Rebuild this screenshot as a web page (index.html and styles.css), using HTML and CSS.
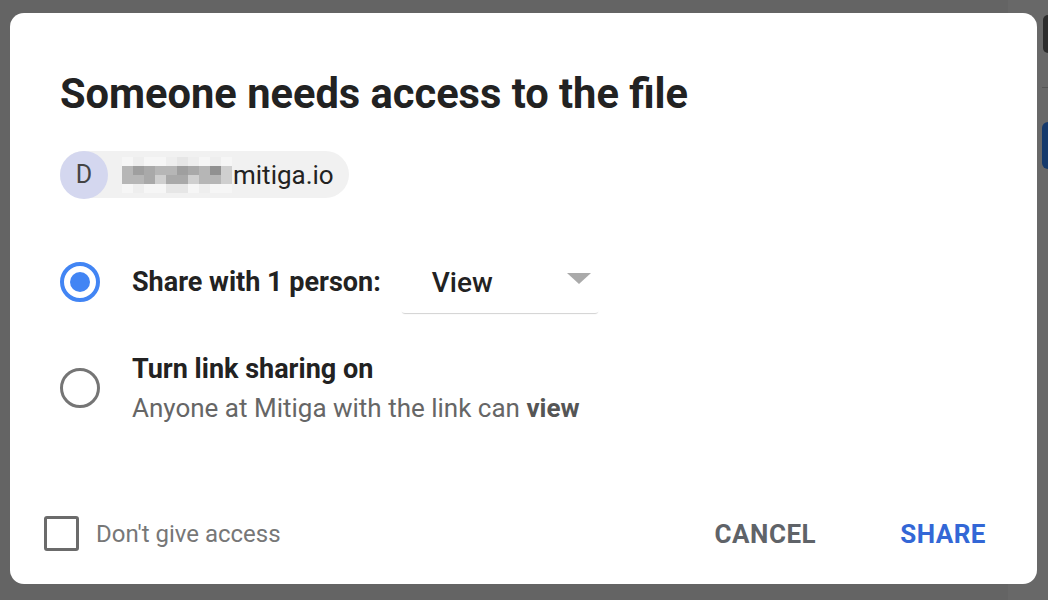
FILE: index.html
```html
<!DOCTYPE html>
<html lang="en">
<head>
    <meta charset="UTF-8">
    <meta name="viewport" content="width=device-width, initial-scale=1.0">
    <title>Share request</title>
    <link rel="stylesheet" href="styles.css">
</head>
<body>
    <!-- page behind the overlay, only the right edge shows -->
    <div class="backdrop">
        <div class="peek-strip"></div>
        <div class="peek-dark"></div>
        <div class="peek-line"></div>
        <div class="peek-blue"></div>
    </div>

    <div class="dialog">
        <h1 class="title">Someone needs access to the file</h1>

        <div class="chip">
            <span class="avatar">D</span>
            <span class="blur">
                <i class="s0"></i><i class="s1"></i><i class="s0"></i><i class="s0"></i><i class="s1"></i><i class="s2"></i><i class="s1"></i><i class="s0"></i><i class="s1"></i><i class="s0"></i>
                <i class="s4"></i><i class="s6"></i><i class="s5"></i><i class="s4"></i><i class="s4"></i><i class="s6"></i><i class="s5"></i><i class="s4"></i><i class="s7"></i><i class="s3"></i>
                <i class="s4"></i><i class="s4"></i><i class="s5"></i><i class="s3"></i><i class="s5"></i><i class="s5"></i><i class="s3"></i><i class="s4"></i><i class="s4"></i><i class="s3"></i>
                <i class="s0"></i><i class="s1"></i><i class="s0"></i><i class="s0"></i><i class="s2"></i><i class="s2"></i><i class="s0"></i><i class="s1"></i><i class="s0"></i><i class="s0"></i>
            </span>
            <span class="email">mitiga.io</span>
        </div>

        <div class="options">
            <div class="option">
                <span class="radio checked"></span>
                <div class="share-row">
                    <span class="option-label">Share with 1 person:</span>
                    <div class="select">
                        <span>View</span>
                        <span class="caret"></span>
                    </div>
                </div>
            </div>

            <div class="option">
                <span class="radio"></span>
                <div class="option-text">
                    <div class="option-label">Turn link sharing on</div>
                    <div class="option-hint">Anyone at Mitiga with the link can <b>view</b></div>
                </div>
            </div>
        </div>

        <div class="footer">
            <label class="deny">
                <span class="checkbox"></span>
                <span>Don't give access</span>
            </label>
            <div class="actions">
                <button class="btn cancel">CANCEL</button>
                <button class="btn share">SHARE</button>
            </div>
        </div>
    </div>
</body>
</html>
```

FILE: styles.css
```css
* {
    margin: 0;
    padding: 0;
    box-sizing: border-box;
}

body {
    font-family: Roboto, "Liberation Sans", Arial, sans-serif;
    background-color: #646464;
    width: 1048px;
    height: 600px;
    overflow: hidden;
    position: relative;
}

/* Page behind the modal */
.backdrop {
    position: absolute;
    inset: 0;
    z-index: 0;
}

.peek-strip {
    position: absolute;
    left: 1008px;
    top: 0;
    width: 40px;
    height: 600px;
    background-color: #686868;
}

.peek-dark {
    position: absolute;
    left: 1043px;
    top: 15px;
    width: 20px;
    height: 38px;
    border-radius: 5px;
    background-color: #2c2c2c;
}

.peek-line {
    position: absolute;
    left: 1042px;
    top: 87px;
    width: 10px;
    height: 1px;
    background-color: #555;
}

.peek-blue {
    position: absolute;
    left: 1042px;
    top: 122px;
    width: 20px;
    height: 47px;
    border-radius: 6px;
    background-color: #163a6c;
}

/* Dialog */
.dialog {
    position: relative;
    z-index: 1;
    width: 1027px;
    height: 571px;
    margin: 13px 0 0 10px;
    background-color: #fff;
    border-radius: 14px;
    display: flex;
    flex-direction: column;
    padding: 57px 51px 0 50px;
}

.title {
    font-size: 41.6px;
    font-weight: 700;
    color: #222;
    line-height: 48px;
}

/* Requester chip */
.chip {
    display: inline-flex;
    align-self: flex-start;
    align-items: center;
    height: 47px;
    margin-top: 33px;
    padding-right: 15px;
    border-radius: 24px;
    background-color: #f1f1f1;
}

.avatar {
    width: 48px;
    height: 48px;
    border-radius: 50%;
    background-color: #d4d7ef;
    color: #444;
    font-size: 25px;
    display: flex;
    align-items: center;
    justify-content: center;
}

.blur {
    display: grid;
    grid-template-columns: repeat(10, 11px);
    grid-auto-rows: 9px;
    margin-left: 14px;
}

.blur i { display: block; }
.blur .s0 { background-color: #f6f6f6; }
.blur .s1 { background-color: #eeeeee; }
.blur .s2 { background-color: #e6e6e6; }
.blur .s3 { background-color: #cfcfcf; }
.blur .s4 { background-color: #b6b6b6; }
.blur .s5 { background-color: #a9a9a9; }
.blur .s6 { background-color: #9f9f9f; }
.blur .s7 { background-color: #919191; }

.email {
    font-size: 26px;
    color: #222;
    margin-left: 1px;
}

/* Radio options */
.options {
    margin-top: 53px;
    display: flex;
    flex-direction: column;
    gap: 40px;
}

.option {
    display: flex;
    align-items: center;
}

.radio {
    flex: none;
    width: 40px;
    height: 40px;
    border-radius: 50%;
    border: 3px solid #757575;
    margin-right: 32px;
    position: relative;
}

.radio.checked {
    border: 4px solid #4285f4;
}

.radio.checked::after {
    content: "";
    position: absolute;
    left: 6px;
    top: 6px;
    width: 20px;
    height: 20px;
    border-radius: 50%;
    background-color: #4285f4;
}

.share-row {
    display: flex;
    align-items: center;
}

.option-label {
    font-size: 27px;
    font-weight: 700;
    color: #222;
    line-height: 32px;
}

.select {
    width: 198px;
    height: 52px;
    margin: 10px 0 0 20px;
    padding: 0 8px 10px 31px;
    display: flex;
    align-items: center;
    justify-content: space-between;
    font-size: 28px;
    font-weight: 500;
    color: #222;
    border-radius: 4px;
    box-shadow: 0 2px 1px -1px rgba(0, 0, 0, 0.18);
}

.caret {
    width: 0;
    height: 0;
    border-left: 12px solid transparent;
    border-right: 12px solid transparent;
    border-top: 11px solid #aaa;
    margin-bottom: 8px;
}

.option-hint {
    font-size: 26px;
    line-height: 30px;
    color: #666;
    margin-top: 8px;
}

.option-hint b {
    color: #555;
}

/* Footer */
.footer {
    margin-top: auto;
    margin-left: -16px;
    height: 104px;
    display: flex;
    align-items: center;
    justify-content: space-between;
    padding-top: 3px;
}

.deny {
    display: flex;
    align-items: center;
    gap: 17px;
    font-size: 24px;
    color: #777;
}

.checkbox {
    width: 35px;
    height: 35px;
    border: 3px solid #6b6b6b;
    border-radius: 3px;
}

.actions {
    display: flex;
    gap: 84px;
}

.btn {
    background: none;
    border: none;
    font-family: inherit;
    font-size: 26px;
    font-weight: 700;
    letter-spacing: 0.5px;
    cursor: pointer;
}

.cancel {
    color: #5f6368;
}

.share {
    color: #3367d6;
}
```
